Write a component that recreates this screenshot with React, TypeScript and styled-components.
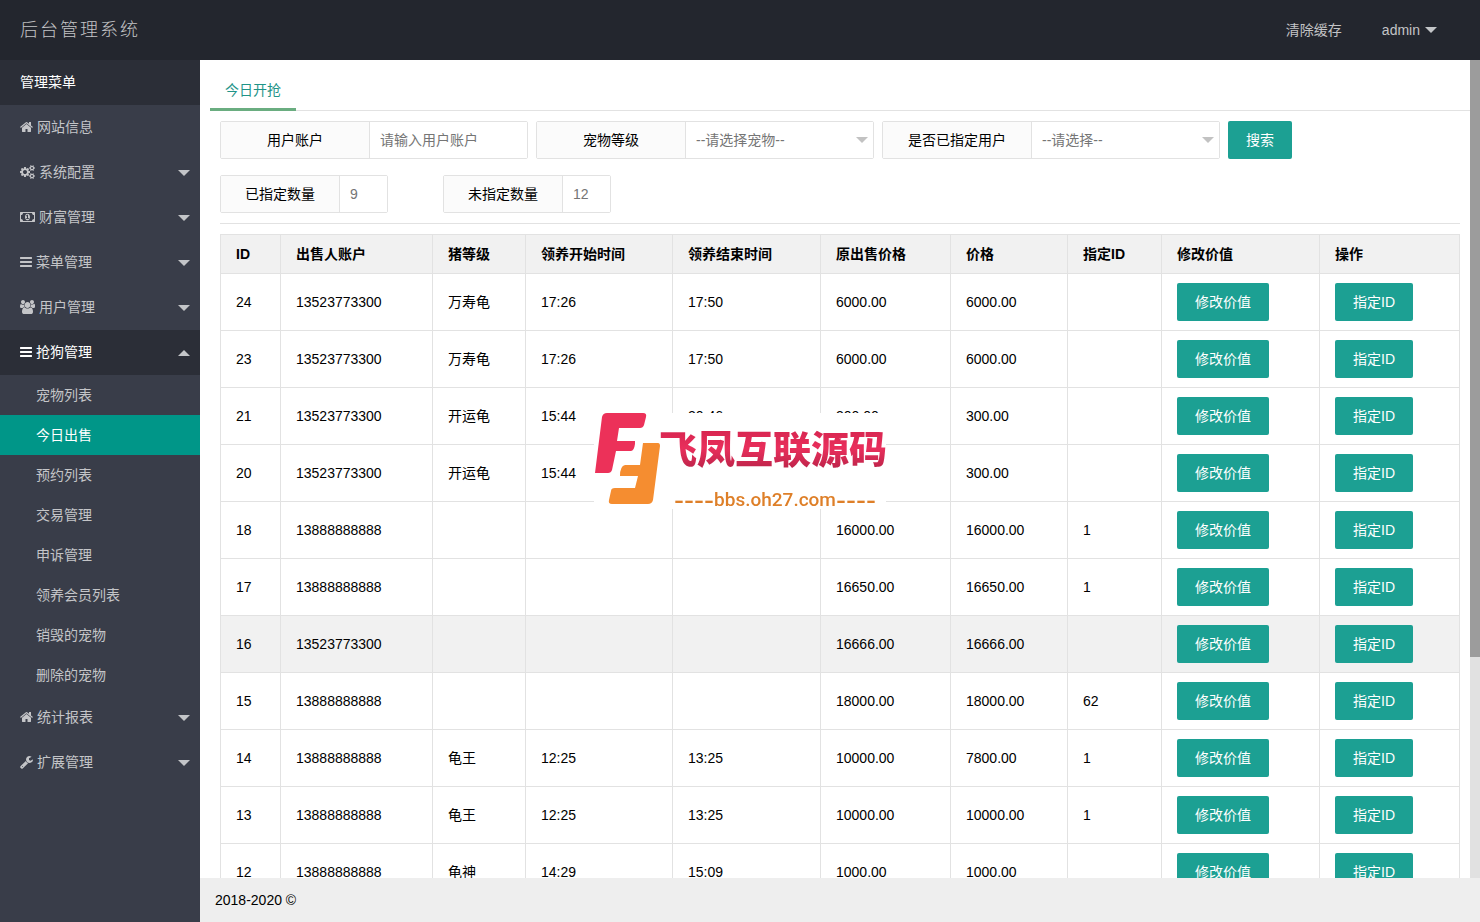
import React from 'react';
import styled, { createGlobalStyle, css } from 'styled-components';

const GlobalStyle = createGlobalStyle`
  *, *::before, *::after { box-sizing: border-box; }
  body {
    margin: 0;
    color: #000;
    background: #fff;
    font: 14px/24px "Liberation Sans", "Noto Sans CJK SC", sans-serif;
  }
  button, input, select { font: inherit; }
  ul { margin: 0; padding: 0; list-style: none; }
  a { color: inherit; text-decoration: none; }
`;

const border = '#e2e2e2';
const teal = '#1ca093';

const Shell = styled.div`
  display: flex;
  flex-direction: column;
  height: 100vh;
`;

const TopBar = styled.header`
  display: flex;
  flex: none;
  align-items: center;
  justify-content: space-between;
  height: 60px;
  padding: 0 23px 0 20px;
  background: #23262e;
  color: #c3c4c6;
`;

const Brand = styled.h1`
  margin: 0;
  font-size: 18px;
  font-weight: 300;
  letter-spacing: 2px;
`;

const TopNav = styled.nav`
  display: flex;
`;

const TopLink = styled.a`
  display: flex;
  align-items: center;
  gap: 5px;
  padding: 0 20px;
`;

const Caret = styled.span<{ $up?: boolean; $color?: string }>`
  flex: none;
  width: 12px;
  height: 6px;
  background: ${p => p.$color ?? '#c3c5c8'};
  clip-path: ${p => (p.$up ? 'polygon(0 100%, 50% 0, 100% 100%)' : 'polygon(0 0, 100% 0, 50% 100%)')};
`;

const Body = styled.div`
  display: flex;
  flex: 1;
  min-height: 0;
`;

const Sidebar = styled.nav`
  flex: none;
  width: 200px;
  overflow: hidden;
  background: #393d49;
  color: #c4c5c8;
`;

const MenuTitle = styled.h2`
  margin: 0;
  padding: 0 20px;
  background: #2b2e37;
  color: #fff;
  font-size: 14px;
  font-weight: 400;
  line-height: 45px;
`;

const MenuLink = styled.a<{ $open?: boolean }>`
  display: flex;
  align-items: center;
  gap: 4px;
  height: 45px;
  padding: 0 10px 1px 20px;
  ${p => p.$open && css`
    background: #2b2e37;
    color: #fff;
  `}
  ${Caret} { margin: 2px 0 0 auto; }
`;

const SubLink = styled.a<{ $active?: boolean }>`
  display: block;
  padding-left: 36px;
  line-height: 40px;
  ${p => p.$active && css`
    background: #009688;
    color: #fff;
  `}
`;

const Column = styled.div`
  display: flex;
  flex: 1;
  flex-direction: column;
  min-width: 0;
`;

const ScrollRow = styled.div`
  display: flex;
  flex: 1;
  min-height: 0;
`;

const Content = styled.main`
  flex: 1;
  min-width: 0;
  padding: 10px 0 0 10px;
  overflow: auto;
  scrollbar-width: none;
`;

const ScrollTrack = styled.div`
  flex: none;
  width: 10px;
  background: #e1e1e1;
`;

const ScrollThumb = styled.div`
  height: 73%;
  background: #9c9c9c;
`;

const Footer = styled.footer`
  flex: none;
  padding: 0 15px;
  background: #eee;
  line-height: 44px;
`;

const Tabs = styled.div`
  display: flex;
  height: 41px;
  border-bottom: 1px solid ${border};
`;

const Tab = styled.button`
  height: 41px;
  padding: 2px 15px 0;
  border: 0;
  border-bottom: 3px solid #6aad80;
  background: none;
  color: #1f9488;
  line-height: 36px;
`;

const Panel = styled.div`
  padding: 10px;
`;

const FieldRow = styled.div<{ $gap: number }>`
  display: flex;
  flex-wrap: wrap;
  gap: ${p => p.$gap}px;
`;

const Filters = styled.form`
  display: flex;
  flex-direction: column;
  gap: 16px;
  margin-bottom: 10px;
  padding-bottom: 10px;
  border-bottom: 1px solid ${border};
`;

const Field = styled.div<{ $width: number }>`
  display: flex;
  position: relative;
  width: ${p => p.$width}px;
  height: 38px;
  border: 1px solid ${border};
  border-radius: 2px;
  > ${Caret} {
    position: absolute;
    top: 15px;
    right: 5px;
    pointer-events: none;
  }
`;

const FieldLabel = styled.label<{ $width: number }>`
  flex: none;
  width: ${p => p.$width}px;
  border-right: 1px solid ${border};
  background: #fbfbfb;
  line-height: 36px;
  text-align: center;
`;

const control = css`
  flex: 1;
  min-width: 0;
  padding: 0 10px;
  border: 0;
  outline: 0;
  background: #fff;
  color: #757575;
`;

const TextInput = styled.input`
  ${control}
  &::placeholder { color: #757575; }
`;

const Select = styled.select`
  ${control}
  appearance: none;
`;

const Button = styled.button`
  display: block;
  height: 38px;
  padding: 0 18px;
  border: 0;
  border-radius: 2px;
  background: ${teal};
  color: #fff;
  white-space: nowrap;
`;

const Table = styled.table`
  width: 100%;
  border-collapse: collapse;
  table-layout: fixed;
`;

const Th = styled.th<{ $share: number }>`
  width: ${p => p.$share}px;
  height: 39px;
  padding: 0 15px;
  border: 1px solid ${border};
  background: #f1f1f1;
  text-align: left;
  white-space: nowrap;
`;

const Tr = styled.tr<{ $hover?: boolean }>`
  background: ${p => (p.$hover ? '#f1f1f1' : '#fff')};
`;

const Td = styled.td`
  height: 57px;
  padding: 0 15px;
  border: 1px solid ${border};
`;

const Watermark = styled.div`
  display: flex;
  position: fixed;
  top: 50%;
  left: 50%;
  width: 292px;
  height: 96px;
  background: #fff;
  pointer-events: none;
  transform: translate(-50%, -50%);
`;

const WatermarkText = styled.div`
  display: flex;
  flex-direction: column;
  align-items: center;
  gap: 14px;
  width: 226px;
`;

const WatermarkName = styled.strong`
  padding-top: 4px;
  background: linear-gradient(#d3234d 20%, #e92f5c 55%, #b92348 90%);
  background-clip: text;
  color: transparent;
  font: 900 38px/60px "Noto Sans CJK SC", sans-serif;
  white-space: nowrap;
`;

const WatermarkUrl = styled.span`
  display: flex;
  align-items: center;
  height: 18px;
  padding-left: 4px;
  color: #de7f28;
  font: 500 19px/18px Roboto, sans-serif;
  white-space: nowrap;
`;

const Dashes = styled.span`
  font: 30px/18px "Liberation Sans", sans-serif;
`;

const glyphs = {
  home: {
    box: '64 0 1664 1792', width: 13,
    d: 'M1472 992v480q0 26-19 45t-45 19h-384v-384h-256v384h-384q-26 0-45-19t-19-45v-480q0-1 .5-3t.5-3l575-474 575 474q1 2 1 6zm223-69l-62 74q-8 9-21 11h-3q-13 0-21-7l-692-577-692 577q-12 8-24 7-13-2-21-11l-62-74q-8-10-7-23.5t11-21.5l719-599q32-26 76-26t76 26l244 204v-195q0-14 9-23t23-9h192q14 0 23 9t9 23v408l219 182q10 8 11 21.5t-7 23.5z',
  },
  cogs: {
    box: '0 0 1920 1792', width: 15,
    d: 'M896 896q0-106-75-181t-181-75-181 75-75 181 75 181 181 75 181-75 75-181zm768 512q0-52-38-90t-90-38-90 38-38 90q0 53 37.5 90.5t90.5 37.5 90.5-37.5 37.5-90.5zm0-1024q0-52-38-90t-90-38-90 38-38 90q0 53 37.5 90.5t90.5 37.5 90.5-37.5 37.5-90.5zm-384 421v185q0 10-7 19.5t-16 10.5l-155 24q-11 35-32 76 34 48 90 115 7 11 7 20 0 12-7 19-23 30-82.5 89.5t-78.5 59.5q-11 0-21-7l-115-90q-37 19-77 31-11 108-23 155-7 24-30 24h-186q-11 0-20-7.5t-10-17.5l-23-153q-34-10-75-31l-118 89q-7 7-20 7-11 0-21-8-144-133-144-160 0-9 7-19 10-14 41-53t47-61q-23-44-35-82l-152-24q-10-1-17-9.5t-7-19.5v-185q0-10 7-19.5t16-10.5l155-24q11-35 32-76-34-48-90-115-7-11-7-20 0-12 7-20 22-30 82-89t79-59q11 0 21 7l115 90q34-18 77-32 11-108 23-154 7-24 30-24h186q11 0 20 7.5t10 17.5l23 153q34 10 75 31l118-89q8-7 20-7 11 0 21 8 144 133 144 160 0 8-7 19-12 16-42 54t-45 60q23 48 34 82l152 23q10 2 17 10.5t7 19.5zm640 533v140q0 16-149 31-12 27-30 52 51 113 51 138 0 4-4 7-122 71-124 71-8 0-46-47t-52-68q-20 2-30 2t-30-2q-14 21-52 68t-46 47q-2 0-124-71-4-3-4-7 0-25 51-138-18-25-30-52-149-15-149-31v-140q0-16 149-31 13-29 30-52-51-113-51-138 0-4 4-7 4-2 35-20t59-34 30-16q8 0 46 46.5t52 67.5q20-2 30-2t30 2q51-71 92-112l6-2q4 0 124 70 4 3 4 7 0 25-51 138 17 23 30 52 149 15 149 31zm0-1024v140q0 16-149 31-12 27-30 52 51 113 51 138 0 4-4 7-122 71-124 71-8 0-46-47t-52-68q-20 2-30 2t-30-2q-14 21-52 68t-46 47q-2 0-124-71-4-3-4-7 0-25 51-138-18-25-30-52-149-15-149-31v-140q0-16 149-31 13-29 30-52-51-113-51-138 0-4 4-7 4-2 35-20t59-34 30-16q8 0 46 46.5t52 67.5q20-2 30-2t30 2q51-71 92-112l6-2q4 0 124 70 4 3 4 7 0 25-51 138 17 23 30 52 149 15 149 31z',
  },
  money: {
    box: '0 0 1920 1792', width: 15,
    d: 'M768 1152h384v-96h-128v-448h-114l-148 137 77 80q42-37 55-57h2v288h-128v96zm512-256q0 70-21 142t-59.5 134-101.5 101-138 39-138-39-101.5-101-59.5-134-21-142 21-142 59.5-134 101.5-101 138-39 138 39 101.5 101 59.5 134 21 142zm512 256v-512q-106 0-181-75t-75-181h-1152q0 106-75 181t-181 75v512q106 0 181 75t75 181h1152q0-106 75-181t181-75zm128-832v1152q0 26-19 45t-45 19h-1792q-26 0-45-19t-19-45v-1152q0-26 19-45t45-19h1792q26 0 45 19t19 45z',
  },
  bars: {
    box: '128 0 1536 1792', width: 12,
    d: 'M1664 1344v128q0 26-19 45t-45 19h-1408q-26 0-45-19t-19-45v-128q0-26 19-45t45-19h1408q26 0 45 19t19 45zm0-512v128q0 26-19 45t-45 19h-1408q-26 0-45-19t-19-45v-128q0-26 19-45t45-19h1408q26 0 45 19t19 45zm0-512v128q0 26-19 45t-45 19h-1408q-26 0-45-19t-19-45v-128q0-26 19-45t45-19h1408q26 0 45 19t19 45z',
  },
  users: {
    box: '64 0 1920 1792', width: 15,
    d: 'M657 896q-162 5-265 128h-134q-82 0-138-40.5t-56-118.5q0-353 124-353 6 0 43.5 21t97.5 42.5 119 21.5q67 0 133-23-5 37-5 66 0 159 93 290zm1071 637q0 120-73 189.5t-194 69.5h-874q-121 0-194-69.5t-73-189.5q0-53 3.5-103.5t14-109 26.5-108.5 43-97.5 62-81 85.5-53.5 111.5-20q10 0 43 21.5t73 48 107 48 135 21.5 135-21.5 107-48 73-48 43-21.5q61 0 111.5 20t85.5 53.5 62 81 43 97.5 26.5 108.5 14 109 3.5 103.5zm-1024-1277q0 106-75 181t-181 75-181-75-75-181 75-181 181-75 181 75 75 181zm704 384q0 159-112.5 271.5t-271.5 112.5-271.5-112.5-112.5-271.5 112.5-271.5 271.5-112.5 271.5 112.5 112.5 271.5zm576 225q0 78-56 118.5t-138 40.5h-134q-103-123-265-128 93-131 93-290 0-29-5-66 66 23 133 23 59 0 119-21.5t97.5-42.5 43.5-21q124 0 124 353zm-128-609q0 106-75 181t-181 75-181-75-75-181 75-181 181-75 181 75 75 181z',
  },
  wrench: {
    box: '64 0 1664 1792', width: 13,
    d: 'M448 1472q0-26-19-45t-45-19-45 19-19 45 19 45 45 19 45-19 19-45zm644-420l-682 682q-37 37-90 37-52 0-91-37l-106-108q-38-36-38-90 0-53 38-91l681-681q39 98 114.5 173.5t173.5 114.5zm634-435q0 39-23 106-47 134-164.5 217.5t-258.5 83.5q-185 0-316.5-131.5t-131.5-316.5 131.5-316.5 316.5-131.5q58 0 121.5 16.5t107.5 46.5q16 11 16 28t-16 28l-293 169v224l193 107q5-3 79-48.5t135.5-81 70.5-35.5q15 0 23.5 10t8.5 25z',
  },
};

type GlyphName = keyof typeof glyphs;

function Glyph({ name }: { name: GlyphName }) {
  const g = glyphs[name];
  return (
    <svg width={g.width} height={14} viewBox={g.box} fill="currentColor" aria-hidden="true">
      <path d={g.d} />
    </svg>
  );
}

type MenuEntry = { icon: GlyphName; label: string; leaf?: boolean; children?: string[] };

const menu: MenuEntry[] = [
  { icon: 'home', label: '网站信息', leaf: true },
  { icon: 'cogs', label: '系统配置' },
  { icon: 'money', label: '财富管理' },
  { icon: 'bars', label: '菜单管理' },
  { icon: 'users', label: '用户管理' },
  {
    icon: 'bars',
    label: '抢狗管理',
    children: ['宠物列表', '今日出售', '预约列表', '交易管理', '申诉管理', '领养会员列表', '销毁的宠物', '删除的宠物'],
  },
  { icon: 'home', label: '统计报表' },
  { icon: 'wrench', label: '扩展管理' },
];

const columns: [string, number][] = [
  ['ID', 60], ['出售人账户', 152], ['猪等级', 93], ['领养开始时间', 147], ['领养结束时间', 148],
  ['原出售价格', 130], ['价格', 117], ['指定ID', 94], ['修改价值', 158], ['操作', 140],
];

const rows: string[][] = [
  ['24', '13523773300', '万寿龟', '17:26', '17:50', '6000.00', '6000.00', ''],
  ['23', '13523773300', '万寿龟', '17:26', '17:50', '6000.00', '6000.00', ''],
  ['21', '13523773300', '开运龟', '15:44', '20:46', '300.00', '300.00', ''],
  ['20', '13523773300', '开运龟', '15:44', '', '', '300.00', ''],
  ['18', '13888888888', '', '', '', '16000.00', '16000.00', '1'],
  ['17', '13888888888', '', '', '', '16650.00', '16650.00', '1'],
  ['16', '13523773300', '', '', '', '16666.00', '16666.00', ''],
  ['15', '13888888888', '', '', '', '18000.00', '18000.00', '62'],
  ['14', '13888888888', '龟王', '12:25', '13:25', '10000.00', '7800.00', '1'],
  ['13', '13888888888', '龟王', '12:25', '13:25', '10000.00', '10000.00', '1'],
  ['12', '13888888888', '龟神', '14:29', '15:09', '1000.00', '1000.00', ''],
];

function SelectField({ id, label, option }: { id: string; label: string; option: string }) {
  return (
    <Field $width={338}>
      <FieldLabel htmlFor={id} $width={149}>{label}</FieldLabel>
      <Select id={id}>
        <option>{option}</option>
      </Select>
      <Caret $color="#c2c2c2" />
    </Field>
  );
}

function CountField({ id, label, value }: { id: string; label: string; value: string }) {
  return (
    <Field $width={168}>
      <FieldLabel htmlFor={id} $width={119}>{label}</FieldLabel>
      <TextInput id={id} value={value} readOnly />
    </Field>
  );
}

export default function App() {
  return (
    <Shell>
      <GlobalStyle />
      <TopBar>
        <Brand>后台管理系统</Brand>
        <TopNav>
          <TopLink href="#cache">清除缓存</TopLink>
          <TopLink href="#admin">admin<Caret /></TopLink>
        </TopNav>
      </TopBar>
      <Body>
        <Sidebar>
          <MenuTitle>管理菜单</MenuTitle>
          <ul>
            {menu.map(item => (
              <li key={item.label}>
                <MenuLink href="#menu" $open={!!item.children}>
                  <Glyph name={item.icon} />
                  {item.label}
                  {!item.leaf && <Caret $up={!!item.children} />}
                </MenuLink>
                {item.children && (
                  <ul>
                    {item.children.map(child => (
                      <li key={child}>
                        <SubLink href="#page" $active={child === '今日出售'}>{child}</SubLink>
                      </li>
                    ))}
                  </ul>
                )}
              </li>
            ))}
          </ul>
        </Sidebar>
        <Column>
          <ScrollRow>
            <Content>
              <Tabs>
                <Tab type="button">今日开抢</Tab>
              </Tabs>
              <Panel>
                <Filters onSubmit={e => e.preventDefault()}>
                  <FieldRow $gap={8}>
                    <Field $width={308}>
                      <FieldLabel htmlFor="account" $width={149}>用户账户</FieldLabel>
                      <TextInput id="account" placeholder="请输入用户账户" />
                    </Field>
                    <SelectField id="level" label="宠物等级" option="--请选择宠物--" />
                    <SelectField id="assigned" label="是否已指定用户" option="--请选择--" />
                    <Button type="submit">搜索</Button>
                  </FieldRow>
                  <FieldRow $gap={55}>
                    <CountField id="done" label="已指定数量" value="9" />
                    <CountField id="todo" label="未指定数量" value="12" />
                  </FieldRow>
                </Filters>
                <Table>
                  <thead>
                    <tr>
                      {columns.map(([name, share]) => <Th key={name} $share={share}>{name}</Th>)}
                    </tr>
                  </thead>
                  <tbody>
                    {rows.map(row => (
                      <Tr key={row[0]} $hover={row[0] === '16'}>
                        {row.map((cell, i) => <Td key={i}>{cell}</Td>)}
                        <Td><Button type="button">修改价值</Button></Td>
                        <Td><Button type="button">指定ID</Button></Td>
                      </Tr>
                    ))}
                  </tbody>
                </Table>
              </Panel>
            </Content>
            <ScrollTrack><ScrollThumb /></ScrollTrack>
          </ScrollRow>
          <Footer>2018-2020 ©</Footer>
        </Column>
      </Body>
      <Watermark>
        <svg width="66" height="96" viewBox="0 0 66 96" aria-hidden="true">
          <path d="M13 0H49Q53 0 52 4L50 12Q49 15 46 15H25L23 28H41V31Q40 38 37 38H22L18 57Q17 60 14 60H1L8 4Q9 0 13 0Z" fill="#ec3159" />
          <path d="M49 30H64Q66 30 66 33L59 87Q58 91 54 91H18Q14 91 15 87L17 78Q17 75 21 75H41L44 63H26Q26 53 31 52H46Z" fill="#f58d30" />
        </svg>
        <WatermarkText>
          <WatermarkName>飞凤互联源码</WatermarkName>
          <WatermarkUrl><Dashes>----</Dashes>bbs.oh27.com<Dashes>----</Dashes></WatermarkUrl>
        </WatermarkText>
      </Watermark>
    </Shell>
  );
}
